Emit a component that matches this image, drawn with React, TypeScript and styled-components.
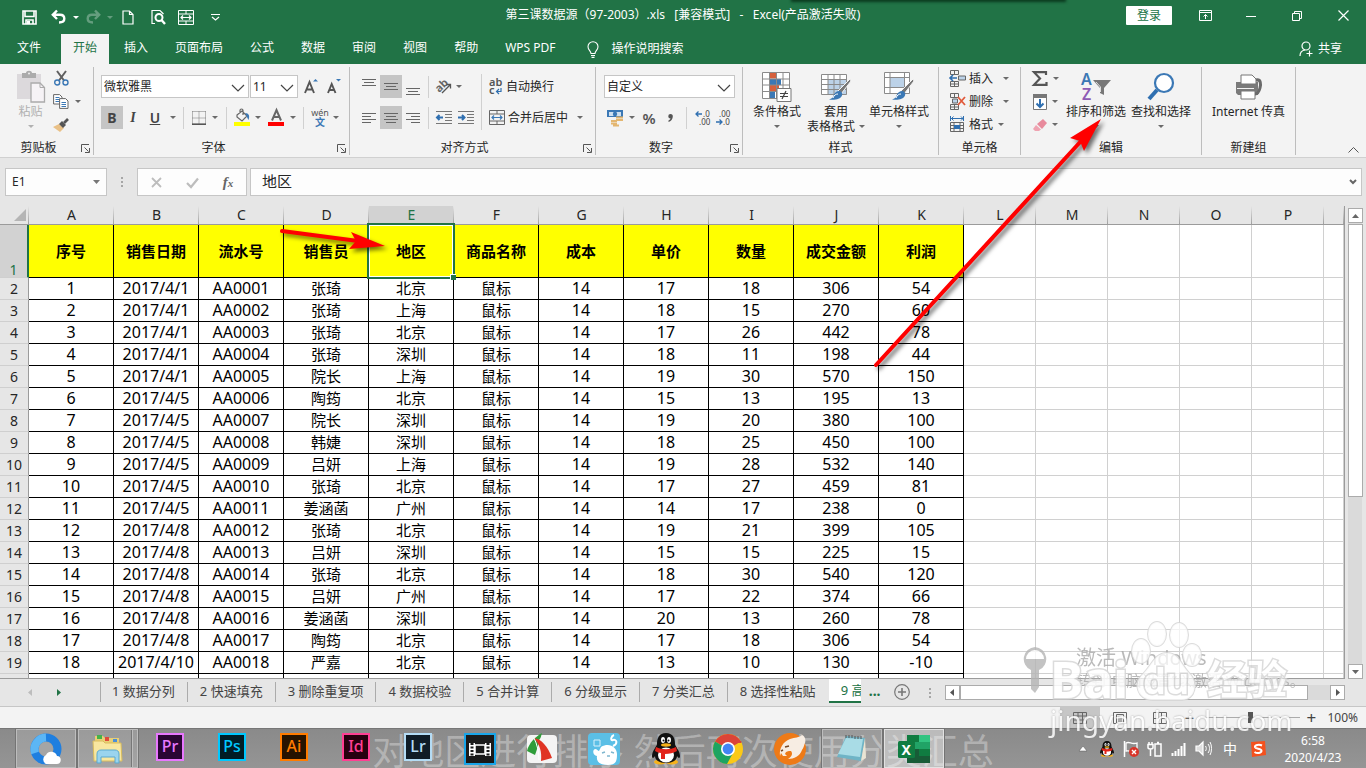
import React from 'react';
import styled, { createGlobalStyle, css } from 'styled-components';

const UI_FONT = '"Noto Sans", "Noto Sans CJK SC", sans-serif';
const GREEN = '#217346';

const GlobalStyle = createGlobalStyle`
  *, *::before, *::after { box-sizing: border-box; }
  body { margin: 0; background: #e6e6e6; }
  button, input, select { font: inherit; color: inherit; margin: 0; padding: 0; border: 0; background: none; border-radius: 0; outline: none; }
  button { display: flex; align-items: center; justify-content: center; white-space: nowrap; }
  svg { display: block; flex: none; overflow: visible; }
`;

const Window = styled.div`
  position: relative;
  display: flex;
  flex-direction: column;
  height: 100vh;
  overflow: hidden;
  font: 12px/16px ${UI_FONT};
  color: #262626;
  background: #e6e6e6;
`;

/* ---------- title bar ---------- */
const TitleBar = styled.header`
  position: relative;
  display: flex;
  height: 34px;
  background: ${GREEN};
  color: #fff;
`;
const TopShade = styled.div`
  position: absolute;
  top: -4px;
  left: 58%;
  width: 20%;
  height: 4px;
  box-shadow: 0 1px 3px 1px #0b3a1f;
`;
const QuickAccess = styled.div`
  flex: 1;
  display: flex;
  align-items: center;
  button:first-child { margin-left: 14px; }
`;
const QuickButton = styled.button<{ $w: number; $dim?: boolean }>`
  width: ${(p) => p.$w}px;
  height: 24px;
  opacity: ${(p) => (p.$dim ? 0.3 : 1)};
`;
const DocTitle = styled.div`
  line-height: 30px;
  white-space: pre;
`;
const WindowControls = styled.div`
  flex: 1;
  display: flex;
  justify-content: flex-end;
  align-items: center;
  height: 31px;
`;
const LoginButton = styled.button`
  width: 46px;
  height: 19px;
  margin-right: 10px;
  background: #fff;
  color: ${GREEN};
  border-radius: 1px;
`;
const ControlButton = styled.button`
  width: 46px;
  height: 30px;
`;

/* ---------- ribbon tabs ---------- */
const TabRow = styled.nav`
  display: flex;
  height: 30px;
  gap: 3px;
  padding-left: 5px;
  background: ${GREEN};
  color: #fff;
`;
const RibbonTab = styled.button<{ $active?: boolean; $file?: boolean }>`
  height: 30px;
  padding: 0 12px 2px;
  ${(p) => p.$file && 'margin-right: 5px;'}
  ${(p) => p.$active && css`background: #f3f3f3; color: ${GREEN};`}
`;
const TellMe = styled.button`
  gap: 13px;
  padding: 0 12px 0 16px;
`;
const ShareButton = styled.button`
  gap: 5px;
  margin-left: auto;
  padding-right: 24px;
`;

/* ---------- ribbon ---------- */
const Ribbon = styled.section`
  display: flex;
  height: 94px;
  background: #f3f3f3;
  border-bottom: 1px solid #d0d0d0;
`;
const Group = styled.div<{ $w: number }>`
  display: flex;
  flex-direction: column;
  flex: none;
  width: ${(p) => p.$w}px;
  height: 88px;
  margin-top: 3px;
  border-right: 1px solid #bdbdbd;
`;
const GroupBody = styled.div<{ $pad?: number }>`
  display: flex;
  height: 69px;
  padding-left: ${(p) => p.$pad ?? 0}px;
`;
const Caption = styled.div`
  display: flex;
  align-items: center;
  height: 19px;
  padding-top: 5px;
  line-height: 14px;
`;
const CaptionText = styled.span`
  flex: 1;
  text-align: center;
`;
const Launcher = styled.button`
  width: 16px;
  height: 14px;
`;
const TwoRows = styled.div`
  display: flex;
  flex-direction: column;
  align-items: flex-start;
  gap: 8px;
  padding-top: 8px;
`;
const ThreeRows = styled.div`
  display: flex;
  flex-direction: column;
`;
const Line = styled.div`
  display: flex;
  align-items: center;
  height: 23px;
`;
const Tool = styled.button<{ $w: number; $on?: boolean }>`
  width: ${(p) => p.$w}px;
  height: 23px;
  background: ${(p) => (p.$on ? '#c5c5c5' : 'transparent')};
`;
const LetterTool = styled(Tool)<{ $style: 'b' | 'i' | 'u' }>`
  font-size: 14px;
  color: #444;
  font-weight: ${(p) => (p.$style === 'b' ? 700 : 600)};
  font-style: ${(p) => (p.$style === 'i' ? 'italic' : 'normal')};
  text-decoration: ${(p) => (p.$style === 'u' ? 'underline' : 'none')};
  font-family: ${(p) => (p.$style === 'i' ? '"Liberation Serif", serif' : UI_FONT)};
`;
const SignTool = styled(Tool)`
  font: 600 15px/20px ${UI_FONT};
  color: #555;
`;
const TextTool = styled.button`
  gap: 3px;
  height: 23px;
  padding-left: 7px;
`;
const Divider = styled.span<{ $w: number }>`
  display: flex;
  justify-content: center;
  width: ${(p) => p.$w}px;
  height: 22px;
  &::before { content: ''; width: 1px; background: #d0d0d0; }
`;
const TallDivider = styled.span`
  width: 1px;
  height: 56px;
  margin: 7px 0 0 4px;
  background: #d0d0d0;
`;
const ComboBox = styled.span<{ $w: number }>`
  position: relative;
  display: flex;
  width: ${(p) => p.$w}px;
  height: 23px;
  margin-right: 1px;
  background: #fff;
  border: 1px solid #c6c6c6;
  select { appearance: none; flex: 1; min-width: 0; padding-left: 2px; }
  svg { position: absolute; right: 3px; top: 8px; pointer-events: none; }
`;
const BigTool = styled.button<{ $w: number; $dim?: boolean }>`
  flex-direction: column;
  justify-content: flex-start;
  width: ${(p) => p.$w}px;
  padding-top: 3px;
  line-height: 15px;
  ${(p) => p.$dim && 'color: #b1b1b1;'}
`;
const BigIcon = styled.span`
  display: flex;
  align-items: center;
  height: 34px;
`;
const BigLine = styled.span`
  display: flex;
  align-items: center;
  gap: 4px;
  height: 15px;
`;
const CollapseButton = styled.button`
  align-self: flex-end;
  width: 26px;
  height: 15px;
  margin-left: auto;
`;

/* ---------- formula bar ---------- */
const FormulaBar = styled.section`
  display: flex;
  padding: 10px 4px 10px 5px;
  height: 48px;
`;
const Field = styled.div`
  display: flex;
  align-items: center;
  height: 28px;
  background: #fdfdfd;
  border: 1px solid #c6c6c6;
`;
const NameField = styled(Field)`
  width: 102px;
  padding: 0 6px;
  input { flex: 1; min-width: 0; }
`;
const Dots = styled.span`
  display: flex;
  flex-direction: column;
  align-items: center;
  justify-content: center;
  gap: 2px;
  width: 30px;
  i { width: 2px; height: 2px; background: #a6a6a6; }
`;
const FormulaButtons = styled(Field)`
  width: 110px;
  margin-right: 3px;
  button { width: 36px; height: 26px; }
`;
const FormulaField = styled(Field)`
  flex: 1;
  padding: 0 4px 0 11px;
  input { flex: 1; font-size: 15px; padding-bottom: 2px; }
`;
const FxSign = styled.span`
  font: italic 700 15px/18px "Liberation Serif", serif;
  color: #666;
  small { font-size: 11px; }
`;

/* ---------- sheet ---------- */
const SheetArea = styled.main`
  display: flex;
  flex: 1;
  min-height: 0;
`;
const Pane = styled.div`
  flex: 1;
  min-width: 0;
  overflow: hidden;
  border-right: 1px solid #9b9b9b;
  border-bottom: 1px solid #9b9b9b;
  background: #fff;
`;
const Grid = styled.table`
  width: 100%;
  table-layout: fixed;
  border-collapse: separate;
  border-spacing: 0;
  text-align: center;
  th, td { padding: 0; white-space: nowrap; overflow: hidden; }
`;
const ColHead = styled.th<{ $on?: boolean }>`
  height: 19px;
  font: 400 14px/18px ${UI_FONT};
  vertical-align: bottom;
  color: ${(p) => (p.$on ? GREEN : '#262626')};
  background: linear-gradient(#e6e6e6, #a0a0a0) right / 1px 100% no-repeat, ${(p) => (p.$on ? '#d2d2d2' : '#e6e6e6')};
  border-bottom: 1px solid #9b9b9b;
`;
const CornerHead = styled(ColHead)`
  svg { margin: 0 3px 3px auto; }
`;
const RowHead = styled.th<{ $on?: boolean }>`
  font: 400 14px/20px ${UI_FONT};
  vertical-align: bottom;
  color: ${(p) => (p.$on ? GREEN : '#262626')};
  background: ${(p) => (p.$on ? '#d2d2d2' : '#e6e6e6')};
  border-right: ${(p) => (p.$on ? `2px solid ${GREEN}` : '1px solid #9b9b9b')};
  border-bottom: 1px solid #cfcfcf;
  ${(p) => p.$on && 'line-height: 15px;'}
`;
const TitleRow = styled.tr`
  height: 53px;
`;
const DataRow = styled.tr`
  height: 22px;
`;
const TitleCell = styled.td`
  font-size: 15px;
  font-weight: 700;
  color: #000;
  background: #ff0;
  border-right: 1px solid #000;
  border-bottom: 1px solid #000;
`;
const ActiveCell = styled(TitleCell)`
  && { position: relative; overflow: visible; }
  &::before {
    content: '';
    position: absolute;
    inset: -2px;
    border: 2px solid ${GREEN};
    box-shadow: inset 0 0 0 1px #fff;
  }
  &::after {
    content: '';
    position: absolute;
    right: -3px;
    bottom: -3px;
    width: 6px;
    height: 6px;
    background: ${GREEN};
    border: solid #fff;
    border-width: 1px 0 0 1px;
  }
`;
const DataCell = styled.td<{ $han?: boolean }>`
  font-size: ${(p) => (p.$han ? 15 : 16)}px;
  line-height: 21px;
  color: #000;
  border-right: 1px solid #000;
  border-bottom: 1px solid #000;
`;
const EmptyCell = styled.td`
  border-right: 1px solid #d0d0d0;
  border-bottom: 1px solid #d0d0d0;
`;
const VerticalScroll = styled.div`
  display: flex;
  flex-direction: column;
  width: 14px;
  margin: 2px 4px 0 3px;
  background: #dadada;
`;
const ScrollArrow = styled.button`
  flex: none;
  width: 15px;
  height: 15px;
  background: #fff;
  border: 1px solid #ababab;
`;
const VerticalThumb = styled.div`
  height: 58%;
  width: 15px;
  margin-top: 1px;
  background: #fff;
  border: 1px solid #ababab;
`;
const Spacer = styled.span`
  flex: 1;
`;

/* ---------- sheet tabs ---------- */
const SheetBar = styled.div`
  display: flex;
  height: 28px;
  border-bottom: 1px solid #c6c6c6;
`;
const SheetNav = styled.div`
  display: flex;
  align-items: center;
  width: 100px;
  padding-left: 15px;
  button { width: 29px; height: 24px; }
`;
const SheetTab = styled.button`
  position: relative;
  height: 24px;
  padding: 0 12px;
  font-size: 13px;
  color: #444;
  &::before { content: ''; position: absolute; left: 0; top: 3px; width: 1px; height: 20px; background: #ababab; }
  & + & { padding-left: 13px; }
`;
const ActiveSheetTab = styled.button`
  justify-content: flex-start;
  width: 32px;
  height: 24px;
  margin-left: 1px;
  padding-left: 12px;
  overflow: hidden;
  font-size: 13px;
  color: ${GREEN};
  background: #fff;
  border-bottom: 2px solid ${GREEN};
`;
const MoreTabs = styled.button`
  width: 28px;
  height: 24px;
  color: ${GREEN};
  font-weight: 700;
  font-size: 14px;
`;
const AddSheet = styled.button`
  width: 26px;
  height: 26px;
`;
const HorizontalScroll = styled.div`
  flex: 1;
  display: flex;
  height: 15px;
  margin: 6px 21px 0 0;
  background: #dadada;
`;
const HorizontalThumb = styled.div`
  width: 87%;
  background: #fff;
  border: 1px solid #ababab;
`;

/* ---------- status bar ---------- */
const StatusBar = styled.footer`
  display: flex;
  align-items: center;
  justify-content: flex-end;
  height: 21px;
  padding-right: 8px;
  background: #f3f3f3;
  color: #444;
`;
const ViewButton = styled.button<{ $on?: boolean }>`
  width: 40px;
  height: 21px;
  background: ${(p) => (p.$on ? '#c6c6c6' : 'transparent')};
`;
const ZoomButton = styled.button`
  width: 18px;
  height: 21px;
  font-size: 17px;
`;
const ZoomSlider = styled.input`
  appearance: none;
  width: 100px;
  height: 11px;
  margin: 0 2px;
  background: linear-gradient(#ababab, #ababab) center / 100% 1px no-repeat;
  &::-webkit-slider-thumb { appearance: none; width: 5px; height: 11px; background: #555; }
`;
const ZoomValue = styled.span`
  margin-left: 7px;
`;

/* ---------- taskbar ---------- */
const Taskbar = styled.div`
  position: relative;
  display: flex;
  height: 40px;
  padding-left: 15px;
  background: linear-gradient(#8a8a8a, #959595);
  border-top: 1px solid #777;
  color: #fff;
`;
const Subtitle = styled.div`
  position: absolute;
  left: 0;
  right: 0;
  top: 0;
  height: 39px;
  overflow: hidden;
  text-align: center;
  font-size: 36px;
  line-height: 46px;
  white-space: pre;
  color: rgba(255, 255, 255, 0.32);
`;
const Slot = styled.button<{ $state?: 'open' | 'active' }>`
  position: relative;
  width: 62px;
  height: 39px;
  ${(p) => p.$state && css`
    width: 60px;
    margin: 0 1px;
    background: ${p.$state === 'active' ? 'rgba(255,255,255,.42)' : 'rgba(255,255,255,.14)'};
    border: 1px solid ${p.$state === 'active' ? '#e2e2e2' : '#bdbdbd'};
    box-shadow: 0 0 0 1px #747474;
  `}
`;
const StackedSlot = styled(Slot)`
  border-right-width: 1px;
  &::after { content: ''; position: absolute; right: 4px; top: 0; bottom: 0; width: 2px; background: #777; border-right: 1px solid #bdbdbd; }
`;
const AdobeTile = styled.span<{ $c: string; $bg: string }>`
  width: 28px;
  height: 28px;
  margin-bottom: 4px;
  border: 2px solid ${(p) => p.$c};
  background: ${(p) => p.$bg};
  color: ${(p) => p.$c};
  font-size: 16px;
  font-weight: 500;
  line-height: 23px;
`;
const Tray = styled.div`
  position: relative;
  display: flex;
  align-items: center;
  margin-left: auto;
`;
const TrayButton = styled.button<{ $w?: number }>`
  width: ${(p) => p.$w ?? 24}px;
  height: 38px;
  font-size: 14px;
`;
const Clock = styled.time`
  width: 84px;
  margin-right: 11px;
  text-align: center;
  line-height: 17px;
`;

/* ---------- overlays ---------- */
const Arrows = styled.svg`
  position: absolute;
  left: 0;
  top: 0;
  pointer-events: none;
  filter: drop-shadow(3px 3px 2px rgba(0, 0, 0, 0.55));
`;
const Activation = styled.div`
  position: absolute;
  right: 54px;
  bottom: 74px;
  display: flex;
  gap: 28px;
  width: 290px;
  color: #a9a9a9;
  pointer-events: none;
  opacity: 0.8;
  white-space: nowrap;
`;
const ActivationTitle = styled.div`
  font-size: 20px;
  line-height: 24px;
`;
const ActivationHint = styled.div`
  font-size: 15px;
  line-height: 20px;
`;
const Watermark = styled.div`
  position: absolute;
  right: 74px;
  bottom: 30px;
  width: 242px;
  color: #fff;
  pointer-events: none;
  opacity: 0.85;
`;
const WatermarkRow = styled.div`
  display: flex;
  align-items: flex-end;
  height: 82px;
  font-weight: 700;
  line-height: 46px;
  paint-order: stroke fill;
  -webkit-text-stroke: 3px #d6d6d6;
`;
const WatermarkLatin = styled.span`
  width: 83px;
  font-size: 50px;
`;
const WatermarkHan = styled.span`
  margin-left: 4px;
  font-size: 40px;
`;
const WatermarkPaw = styled.span`
  position: relative;
  width: 70px;
  height: 82px;
`;
const PawText = styled.span`
  position: absolute;
  left: 10px;
  bottom: 0;
  font-size: 36px;
  line-height: 42px;
`;
const WatermarkUrl = styled.div`
  font-size: 28px;
  line-height: 36px;
  text-shadow: 0 0 2px #888;
`;

/* ---------- icons ---------- */
type IconProps = { w?: number; h?: number; box?: string; children: React.ReactNode };
const Icon = ({ w = 16, h = 16, box, children }: IconProps) => (
  <svg width={w} height={h} viewBox={box ?? `0 0 ${w} ${h}`} fill="none" aria-hidden="true">{children}</svg>
);
const Caret = ({ c = '#6a6a6a' }: { c?: string }) => <Icon w={6} h={3}><path d="M0 0h6L3 3z" fill={c} /></Icon>;
const Chevron = () => <Icon w={14} h={8}><path d="M1 1l6 6 6-6" stroke="#444" strokeWidth="1.2" /></Icon>;
const LauncherIcon = () => <Icon w={9} h={9}><path d="M.5 8V.500h7.500M3.500 3.500l4 4M8.500 4v4.500H4" stroke="#555" /></Icon>;

const SaveIcon = () => (
  <Icon w={15} h={15}><path d="M1 1h13v13H1zM3 1v5.500h9V1M4 14v-4h7v4" stroke="#fff" strokeWidth="1.600" /><path d="M5 11h3v3H5z" fill="#fff" /></Icon>
);
const UndoIcon = ({ flip }: { flip?: boolean }) => (
  <Icon w={15} h={14}>
    <g transform={flip ? 'matrix(-1 0 0 1 15 0)' : undefined} stroke="#fff" strokeWidth="2.400">
      <path d="M6 .5L1.800 4.800 6 9M2 4.800h7c3 0 4.300 1.500 4.300 4S11.500 12.500 8 12.500" />
    </g>
  </Icon>
);
const PageIcon = () => <Icon w={12} h={15}><path d="M1 1h6.500L11 4.500V14H1zM7.500 1v3.500H11" stroke="#fff" strokeWidth="1.200" /></Icon>;
const PreviewIcon = () => (
  <Icon w={15} h={16}><path d="M4 14.500H1v-13h8L12.500 5" stroke="#fff" strokeWidth="1.200" /><circle cx="8" cy="8.500" r="3.500" stroke="#fff" strokeWidth="2" /><path d="M10.500 11l3.500 4" stroke="#fff" strokeWidth="2.400" /></Icon>
);
const MergeIcon = ({ c = '#666', a = '#3b78b5' }: { c?: string; a?: string }) => (
  <Icon w={16} h={15}>
    <path d="M.5.500h15v14H.5zM.5 4h15M.5 11h15M8 .5V4M8 11v3.500" stroke={c} />
    <path d="M3 7.500h10M5 5.500l-2 2 2 2M11 5.500l2 2-2 2" stroke={a} strokeWidth="1.200" />
  </Icon>
);
const BulbIcon = () => (
  <Icon w={12} h={17}><path d="M4 12.500c0-2.500-3-3.500-3-6.800a5 5 0 0 1 10 0c0 3.300-3 4.300-3 6.800zM4 14.500h4M4.500 16.400h3" stroke="#fff" strokeWidth="1.100" /></Icon>
);
const ShareIcon = () => (
  <Icon w={14} h={16}><circle cx="7" cy="5" r="4" stroke="#fff" strokeWidth="1.200" /><path d="M1 15c0-3.500 2-5.500 5-6M10.500 9.500v6M7.500 12.500h6" stroke="#fff" strokeWidth="1.200" /></Icon>
);
const PasteIcon = () => (
  <Icon w={30} h={32}>
    <path d="M1 3h24v25H1z" fill="#dcd9dc" /><path d="M6 2h4c0-3 6-3 6 0h4v5H6z" fill="#ababab" /><circle cx="13" cy="2.500" r="1" fill="#eee" />
    <path d="M15 12h9l4.500 4.500V31H15z" fill="#f6f3f6" stroke="#ababab" strokeWidth="1.300" /><path d="M24 12v4.500h4.500" stroke="#ababab" />
  </Icon>
);
const CutIcon = () => (
  <Icon w={15} h={15}><path d="M3 0l7 9.500M12 0L5 9.500" stroke="#5f5f5f" strokeWidth="2" /><circle cx="3.200" cy="11.500" r="2.500" stroke="#3b78b5" strokeWidth="1.400" /><circle cx="11.500" cy="11.500" r="2.500" stroke="#3b78b5" strokeWidth="1.400" /></Icon>
);
const CopyIcon = () => (
  <Icon w={16} h={15}>
    <path d="M.6.600h6L9 3v7H.6z" fill="#fff" stroke="#666" /><path d="M2.500 3.500h4M2.500 5.500h4M2.500 7.500h4" stroke="#3b78b5" />
    <path d="M6.600 4.600h6L15 7v7.400H6.600z" fill="#fff" stroke="#666" /><path d="M8.500 8.500h4.500M8.500 10.500h4.500M8.500 12.500h4.500" stroke="#3b78b5" />
  </Icon>
);
const BrushIcon = () => (
  <Icon w={16} h={14}><path d="M0 9l6-3 5 4-4 4z" fill="#e9c086" /><path d="M6 6l3-3 4 4-3 3z" fill="#555" /><path d="M11 5l4-4" stroke="#555" strokeWidth="2.600" /></Icon>
);
const SizeIcon = ({ up }: { up?: boolean }) => (
  <Icon w={14} h={16}>
    <path d={up ? 'M1 14L5.500 3l4.500 11M2.800 10.500h5.500' : 'M1 14l3.700-9L8.500 14M2.500 11h4.500'} stroke="#555" strokeWidth="1.900" />
    <path d={up ? 'M9 2.500L11.500 0 14 2.500z' : 'M9 0h5l-2.500 2.500z'} fill="#3b78b5" />
  </Icon>
);
const BorderIcon = () => <Icon w={14} h={14}><path d="M.5.500v13M13.500.500v13M7 .5v13M.5.500h13M.5 7h13" stroke="#777" strokeDasharray="1 1" /><path d="M0 13.200h14" stroke="#555" strokeWidth="1.600" /></Icon>;
const FillIcon = () => (
  <Icon w={17} h={17}><path d="M3 6l5-4 5 5-5 5-5-4zM6 4V1.500a1.500 1.500 0 0 1 3 0V6" stroke="#666" strokeWidth="1.200" /><path d="M11 4c4 0 5 3 3.500 7C13 9 12.500 6 11 4z" fill="#3b78b5" /><path d="M0 13h16v4H0z" fill="#ff0" /></Icon>
);
const FontColorIcon = () => (
  <Icon w={17} h={17}><path d="M4 11.500L8.500 1 13 11.500M5.700 8h5.600" stroke="#666" strokeWidth="2" /><path d="M0 13h16v4H0z" fill="red" /></Icon>
);
const PhoneticBox = styled.span`
  display: flex;
  flex-direction: column;
  align-items: center;
  font-size: 9px;
  line-height: 9px;
  color: #555;
  b { font-size: 10px; line-height: 10px; color: #3b78b5; }
`;
const lineSets: Record<string, string> = {
  top: 'M0 2.500h14M2 5.500h10M0 8.500h14',
  middle: 'M0 6.500h14M2 9.500h10M0 12.500h14',
  bottom: 'M0 11.500h14M2 14.500h10M0 17.500h14',
  left: 'M0 5.500h14M0 8.500h9M0 11.500h14M0 14.500h9',
  center: 'M0 5.500h14M2 8.500h10M0 11.500h14M2 14.500h10',
  right: 'M0 5.500h14M5 8.500h9M0 11.500h14M5 14.500h9',
};
const AlignIcon = ({ kind }: { kind: string }) => <Icon w={14} h={20}><path d={lineSets[kind]} stroke="#666" /></Icon>;
const OrientIcon = () => (
  <Icon w={17} h={17}><text x="0" y="13" fontSize="11" fontWeight="700" fill="#666" transform="rotate(-45 4 10)" fontFamily="Noto Sans">ab</text><path d="M6 15l8-8M10.500 6.500h4v4" stroke="#555" strokeWidth="1.300" /></Icon>
);
const IndentIcon = ({ right }: { right?: boolean }) => (
  <Icon w={16} h={14}>
    <path d="M0 .5h16M9 3.500h7M9 6.500h7M9 9.500h7M0 12.500h16" stroke="#777" />
    <path d={right ? 'M0 6.500h6M4 4l2.500 2.500L4 9' : 'M1 6.500h6M3.500 4L1 6.500 3.500 9'} stroke="#2f6fb0" strokeWidth="2" />
  </Icon>
);
const WrapIcon = () => (
  <Icon w={14} h={17}><text x="0" y="8" fontSize="11" fontWeight="600" fill="#555" fontFamily="Noto Sans">ab</text><text x="0" y="16" fontSize="11" fontWeight="600" fill="#555" fontFamily="Noto Sans">c</text><path d="M12 10v3.500H8M10 11l-2.500 2.500L10 16" stroke="#2f6fb0" strokeWidth="1.200" /></Icon>
);
const CommaIcon = () => <Icon w={5} h={8}><path d="M2.500 0a2.300 2.300 0 0 1 2.300 2.500C4.800 5 3 7.300.5 8V6.500c1.200-.5 1.900-1.200 2-2A2.200 2.200 0 0 1 2.500 0z" fill="#555" /></Icon>;
const CurrencyIcon = () => (
  <Icon w={17} h={17}>
    <path d="M0 1h16v7H0z" fill="#3b78b5" /><path d="M2 3h12v4H2z" fill="#cfe0f0" /><circle cx="8" cy="5" r="2.200" fill="#3b78b5" />
    <path d="M4 8h12v9H4z" fill="#f3f3f3" /><path d="M9 8.500h7M9 11h7M4 12h6M4 14.500h6M6 16.500h6" stroke="#e3b670" strokeWidth="1.800" />
  </Icon>
);
const DecimalIcon = ({ more }: { more?: boolean }) => (
  <Icon w={15} h={16}>
    <text x={more ? 7 : 3} y="7" fontSize="8" fill="#444" fontFamily="Noto Sans">{more ? '.0' : '.00'}</text>
    <text x={more ? 3 : 7} y="15" fontSize="8" fill="#444" fontFamily="Noto Sans">{more ? '.00' : '.0'}</text>
    <path d={more ? 'M0 4h6M2.500 1.500L0 4l2.500 2.500' : 'M0 12h6M3.500 9.500L6 12l-2.500 2.500'} stroke="#2f6fb0" strokeWidth="1.300" />
  </Icon>
);
const CondIcon = () => (
  <Icon w={30} h={30}>
    <path d="M.5.500h27v26H.5z" fill="#fff" /><path d="M8 .5h6v6H8zM8 13h9v6H8z" fill="#d6603c" /><path d="M8 7h11v6H8zM8 19h5v7H8z" fill="#3b78b5" />
    <path d="M.5.500h27v26H.5zM.5 7h27M.5 13h27M.5 19.500h27M7.500.500v26M14.500.500v26M21 .5v26" stroke="#8a8a8a" />
    <path d="M15 16.500h14v13H15z" fill="#fff" stroke="#777" /><path d="M18 21.500h8M18 24.500h8M24 19l-4 8" stroke="#444" strokeWidth="1.200" />
  </Icon>
);
const StyleBrush = () => (
  <><path d="M29 7L17 19l3 3L30 9z" fill="#777" stroke="#f3f3f3" /><path d="M18 19c2 0 4 2 3 4.500-1.500 4-8 5-13 4 4-1 4-3 5-5s3-3.500 5-3.500z" fill="#3b78b5" /><path d="M12 26c1-3 3-4 5-4" stroke="#fff" /></>
);
const TableStyleIcon = () => (
  <Icon w={30} h={30}><path d="M.5 2.500h25v20H.5z" fill="#fff" /><path d="M7 8h19v15H7z" fill="#bcd2e8" /><path d="M.5 2.500h25v20H.5zM.5 7.500h25M.5 12.500h25M.5 17.500h25M7 2.500v20M13 2.500v20M19 2.500v20" stroke="#8a8a8a" /><StyleBrush /></Icon>
);
const CellStyleIcon = () => (
  <Icon w={30} h={30}><path d="M.5.500h25v21H.5z" fill="#fff" /><path d="M6 5.500h14v10H6z" fill="#bcd2e8" /><path d="M.5.500h25v21H.5zM.5 5.500h25M.5 15.500h25M6 .5v21M20.500.500v21" stroke="#8a8a8a" /><StyleBrush /></Icon>
);
const InsertIcon = () => (
  <Icon w={17} h={17}><path d="M1.500.500h8v4h-8zM5.500.500v4M1.500 11.500h8v5h-8zM5.500 11.500v5M1.500 14h8" stroke="#666" /><path d="M9.500 6h7v4h-7z" fill="#bcd2e8" stroke="#666" /><path d="M1 8h7M4 5L1 8l3 3" stroke="#2f6fb0" strokeWidth="1.600" /></Icon>
);
const DeleteIcon = () => (
  <Icon w={17} h={17}><path d="M1.500.500h8v4h-8zM5.500.500v4M1.500 11.500h8v5h-8zM5.500 11.500v5M1.500 14h8" stroke="#666" /><path d="M3.500 6h5v4h-5z" fill="#bcd2e8" stroke="#666" /><path d="M9 4l7 8M16 4l-7 8" stroke="#e0593a" strokeWidth="1.800" /></Icon>
);
const FormatIcon = () => (
  <Icon w={17} h={17}><path d="M1.500 0v5M14.500 0v5M2 2.500h12M4.500.500l-2 2 2 2M12 .5l2 2-2 2" stroke="#2f6fb0" /><path d="M1.500 6.500h13v9h-13zM1.500 9.500h13M1.500 12.500h13M5 6.500v9M11 6.500v9" stroke="#666" /><path d="M5 9h6v4H5z" fill="#2f6fb0" /></Icon>
);
const SumIcon = () => <Icon w={16} h={15}><path d="M14 4V1.200H2L8 7.500 2 13.800h12.500V11" stroke="#555" strokeWidth="2.200" /></Icon>;
const FillDownIcon = () => <Icon w={14} h={16}><path d="M.5.500h13v15H.5z" fill="#fff" stroke="#777" /><path d="M0 0h14v4H0z" fill="#777" /><path d="M7 5v8M3.500 9.500L7 13l3.500-3.500" stroke="#2f6fb0" strokeWidth="2" /></Icon>;
const EraserIcon = () => <Icon w={14} h={14}><path d="M4 6l6-5 4 4-5 6z" fill="#e88a9c" /><path d="M3 7l5 4.500L6 13H2L0 11z" fill="#efa3b1" /></Icon>;
const SortIcon = () => (
  <Icon w={30} h={30}>
    <text x="0" y="13" fontSize="16" fontWeight="600" fill="#3b78b5" fontFamily="Noto Sans">A</text><text x="1" y="28" fontSize="16" fontWeight="600" fill="#8e5bb5" fontFamily="Noto Sans">Z</text>
    <path d="M12 8h18l-7 8v7l-4-2v-5z" fill="#777" /><path d="M15 10l4.500 5v5" stroke="#ddd" />
  </Icon>
);
const FindIcon = () => <Icon w={28} h={28}><path d="M10 17L2 26" stroke="#2f6fb0" strokeWidth="4" /><circle cx="17" cy="10" r="9" fill="#fff" stroke="#3b78b5" strokeWidth="2.200" /></Icon>;
const FaxIcon = () => (
  <Icon w={26} h={26}><path d="M0 8h22v13H2l-2-2z" fill="#7a7a7a" /><path d="M5 1h11l4 4v5H5z" fill="#fff" stroke="#777" /><path d="M5 17h14v8H5z" fill="#fff" stroke="#777" /><path d="M20 6c5-1 5 4 4 8s-3 6-5 6" stroke="#6a6a6a" strokeWidth="3" /><path d="M1 14.500h17" stroke="#f3f3f3" /></Icon>
);
const ViewIcon = ({ kind }: { kind: 'normal' | 'page' | 'break' }) => (
  <Icon w={14} h={12}>
    <path d="M.5.500h13v11H.5z" stroke="#666" />
    <path d={kind === 'normal' ? 'M.5 4h13M.5 8h13M5 .5v11M9.500.500v11' : kind === 'page' ? 'M3.500 2.500h7v9M3.500 2.500v9M5 5h4M5 7h4M5 9h4' : 'M.5 6.500h5V.500M8.500.500v6h5M8.500 6.500v5'} stroke="#666" />
  </Icon>
);
const QQPenguin = ({ s }: { s: number }) => (
  <Icon w={s} h={s} box="0 0 32 32">
    <ellipse cx="10" cy="29" rx="6" ry="2.500" fill="#f6b21b" /><ellipse cx="22" cy="29" rx="6" ry="2.500" fill="#f6b21b" />
    <path d="M16 0c7 0 9 5 9 11 0 2 5 7 5 12 0 3-2 2-3 0 0 4-4 7-11 7S5 27 5 23c-1 2-3 3-3 0C2 18 7 13 7 11 7 5 9 0 16 0z" fill="#111" />
    <ellipse cx="16" cy="22" rx="8" ry="7.500" fill="#fff" /><path d="M6 14c6 3 14 3 20 0l1 4c-3 2-8 3-12 3v5h-4v-6c-2 0-4-1-6-2z" fill="#e2231a" />
    <ellipse cx="13" cy="7" rx="2" ry="3" fill="#fff" /><ellipse cx="19" cy="7" rx="2" ry="3" fill="#fff" /><circle cx="13.500" cy="7.500" r="1" fill="#111" /><circle cx="18.500" cy="7.500" r="1" fill="#111" />
    <ellipse cx="16" cy="12" rx="5" ry="1.700" fill="#f6b21b" />
  </Icon>
);
const BrowserIcon = () => (
  <Icon w={32} h={32}>
    <circle cx="16" cy="16" r="11.500" stroke="#1f7fe0" strokeWidth="8" /><path d="M5 20A12 12 0 0 1 16 4.500" stroke="#5cb6f5" strokeWidth="8" /><circle cx="16" cy="16" r="7" fill="#a5a5a5" />
    <path d="M16 31a5 5 0 0 1 0-9 6 6 0 0 1 11 1c5 0 5 8 0 8z" fill="#fff" />
  </Icon>
);
const FolderIcon = () => (
  <Icon w={32} h={32}>
    <path d="M3 3h8l2 2h14v22H3z" fill="#e9cf74" /><path d="M5 2h5v4H5z" fill="#45b24a" /><path d="M13 4h4v4h-4z" fill="#e04a3a" /><path d="M21 6h4v3h-4z" fill="#4a90d9" />
    <path d="M1 8h10l2 2h16l1 18H2z" fill="#f8e7a0" stroke="#d9bd5e" /><path d="M5 30V21c0-3 2-4 4-4h14c2 0 4 1 4 4v9h-4v-6H9v6z" fill="#9ad4ee" stroke="#5aa9cf" />
  </Icon>
);
const FilmIcon = () => (
  <Icon w={32} h={32}><path d="M1 1h30v30H1z" fill="#1a1a1a" stroke="#19a5e8" strokeWidth="2" /><path d="M5 10h6v13H5zM21 10h6v13h-6z" fill="#fff" /><path d="M11 12h10v9H11z" stroke="#fff" strokeWidth="1.500" /><path d="M8 10v13M24 10v13" stroke="#1a1a1a" strokeWidth="3" strokeDasharray="2 1.500" /></Icon>
);
const CaptureIcon = () => (
  <Icon w={30} h={32}><rect y="2" width="30" height="28" rx="4" fill="#f4f4f4" /><path d="M0 18C2 10 8 4 15 0c-1 3-1 5-3 7 0 4-2 9-4 15z" fill="#2f9d3a" /><path d="M7 5c7 1 14 8 18 20l-11 3c1-9-1-16-7-23z" fill="#e03423" /><path d="M7 5c3 6 5 14 5 22" stroke="#fff" /></Icon>
);
const BearIcon = () => (
  <Icon w={32} h={32}><rect width="32" height="32" rx="4" fill="#5bbfe6" /><path d="M13 14c8-5 16 0 16 7s-1 11-9 11-12-3-11-9c-4 0-5-6-2-7 2 0 3 2 4 2z" fill="#fff" /><path d="M25 13c5-2 4-7 0-6-3 1-2-4 1-5" stroke="#fff" strokeWidth="2" /><path d="M14 20l3-1M23 19l3 1M19 23h3" stroke="#7fb7cf" strokeWidth="1.500" /><path d="M6 7h6v6H6z" stroke="#d9f1fb" /></Icon>
);
const ChromeIcon = () => (
  <Icon w={30} h={30}>
    <circle cx="15" cy="15" r="15" fill="#fbc916" /><path d="M15 15L2 7.500A15 15 0 0 1 28 7.500z" fill="#db4437" /><path d="M15 15L2 7.500A15 15 0 0 0 14 30l6-11z" fill="#1da462" /><path d="M15 8h13.300" stroke="#db4437" strokeWidth="2" />
    <circle cx="15" cy="15" r="7" fill="#fff" /><circle cx="15" cy="15" r="5.400" fill="#4285f4" />
  </Icon>
);
const CheetahIcon = () => (
  <Icon w={32} h={32}><circle cx="16" cy="16" r="16" fill="#ee7a17" /><path d="M28 2c3 1 4 5 3 8-1 2-1 4-3 7-2 6-8 9-14 9 4-3 5-5 3-8-3 0-5 0-6 3l2 2-4 0-2-3-1 3c-1-8 3-14 10-17 5-2 9-1 12-4z" fill="#f7ede3" /><path d="M11 14l4-1M9 17l-2 1" stroke="#7a4a26" strokeWidth="1.600" /></Icon>
);
const NotepadIcon = () => (
  <Icon w={32} h={32}><path d="M10 3l19 2-4 23-24-4z" fill="#6fb4c6" /><path d="M10 5l17 1-3 18-22-3z" fill="#a9dce6" /><path d="M29 5l1 20-5 3z" fill="#e9e4d4" /><path d="M10 2v3M13 2v3M16 2v3M19 3v3M22 3v3M25 3v3" stroke="#555" /></Icon>
);
const ExcelLogo = () => (
  <Icon w={32} h={28}>
    <path d="M9 0h23v28H9z" fill="#21a366" /><path d="M9 0h12v7H9z" fill="#107c41" /><path d="M21 0h11v7H21z" fill="#33c481" /><path d="M9 14h12v14H9z" fill="#185c37" /><path d="M21 14h11v7H21z" fill="#107c41" /><path d="M21 21h11v7H21z" fill="#185c37" />
    <rect y="6" width="17" height="17" rx="1.500" fill="#107c41" /><text x="3.500" y="19.500" fontSize="14" fontWeight="700" fill="#fff" fontFamily="Noto Sans">X</text>
  </Icon>
);
const FlagIcon = () => <Icon w={16} h={16}><path d="M1.500 0v16" stroke="#fff" strokeWidth="1.500" /><path d="M3 2c4-2 5 2 11 0v8c-5 2-7-1-11 0z" stroke="#fff" strokeWidth="1.300" /><circle cx="11" cy="11" r="5" fill="#d8352a" /><path d="M9 9l4 4M13 9l-4 4" stroke="#fff" strokeWidth="1.400" /></Icon>;
const PowerIcon = () => <Icon w={16} h={16}><path d="M8 3h6v12H8zM10 1.500h2M3.500 8v7M1 3.500v3c0 2 5 2 5 0v-3zM2 1v2M5 1v2" stroke="#fff" strokeWidth="1.500" /></Icon>;
const SignalIcon = () => <Icon w={16} h={14}><path d="M1.500 14v-3M4.500 14V9M7.500 14V7M10.500 14V4M13.500 14V1" stroke="#fff" strokeWidth="2" /></Icon>;
const VolumeIcon = () => <Icon w={17} h={15}><path d="M1 5h3l4-4v13l-4-4H1z" stroke="#fff" strokeWidth="1.200" fill="#ddd" /><path d="M10.500 5c1 1.500 1 3.500 0 5M13 3c2 2.500 2 6.500 0 9M15 1c2 3 2 10 0 13" stroke="#fff" /></Icon>;
const SogouIcon = () => <Icon w={16} h={16}><path d="M1 1l14-1 1 14-14 2z" fill="#f4511e" /><path d="M12 4.500C9 3 4.500 4 5 6.300c.5 2 6.500 1 6.500 3.500 0 2.300-4.500 3-7 1.200" stroke="#fff" strokeWidth="2" /></Icon>;

/* ---------- data ---------- */
const headings = ['序号', '销售日期', '流水号', '销售员', '地区', '商品名称', '成本', '单价', '数量', '成交金额', '利润'];
const letters = 'ABCDEFGHIJKLMNOP'.split('');
const emptyCols = ['L', 'M', 'N', 'O', 'P', 'Q'];
const sales: Array<[string, string, string, number, number, number, number]> = [
  ['2017/4/1', '张琦', '北京', 17, 18, 306, 54],
  ['2017/4/1', '张琦', '上海', 18, 15, 270, 60],
  ['2017/4/1', '张琦', '北京', 17, 26, 442, 78],
  ['2017/4/1', '张琦', '深圳', 18, 11, 198, 44],
  ['2017/4/1', '院长', '上海', 19, 30, 570, 150],
  ['2017/4/5', '陶筠', '北京', 15, 13, 195, 13],
  ['2017/4/5', '院长', '深圳', 19, 20, 380, 100],
  ['2017/4/5', '韩婕', '深圳', 18, 25, 450, 100],
  ['2017/4/5', '吕妍', '上海', 19, 28, 532, 140],
  ['2017/4/5', '张琦', '北京', 17, 27, 459, 81],
  ['2017/4/5', '姜涵菡', '广州', 14, 17, 238, 0],
  ['2017/4/8', '张琦', '北京', 19, 21, 399, 105],
  ['2017/4/8', '吕妍', '深圳', 15, 15, 225, 15],
  ['2017/4/8', '张琦', '北京', 18, 30, 540, 120],
  ['2017/4/8', '吕妍', '广州', 17, 22, 374, 66],
  ['2017/4/8', '姜涵菡', '深圳', 20, 13, 260, 78],
  ['2017/4/8', '陶筠', '北京', 17, 18, 306, 54],
  ['2017/4/10', '严嘉', '北京', 13, 10, 130, -10],
];
const sheetTabs = ['1 数据分列', '2 快速填充', '3 删除重复项', '4 数据校验', '5 合并计算', '6 分级显示', '7 分类汇总', '8 选择性粘贴'];
const ribbonTabs = ['插入', '页面布局', '公式', '数据', '审阅', '视图', '帮助', 'WPS PDF'];
const adobe = [
  ['Pr', '#e878ff', '#2a0634'],
  ['Ps', '#00c8ff', '#001d26'],
  ['Ai', '#ff7c00', '#261300'],
  ['Id', '#ff3f93', '#27000f'],
  ['Lr', '#b4dcf5', '#0f1c26'],
];

type ComboProps = { label: string; value: string; w: number };
const Combo = ({ label, value, w }: ComboProps) => (
  <ComboBox $w={w}><select aria-label={label} defaultValue={value}><option>{value}</option></select><Chevron /></ComboBox>
);
const CaretTool = ({ w, label }: { w: number; label: string }) => <Tool $w={w} aria-label={label}><Caret /></Tool>;
const GroupCaption = ({ text, launcher }: { text: string; launcher?: boolean }) => (
  <Caption><CaptionText>{text}</CaptionText>{launcher && <Launcher aria-label={`${text}设置`}><LauncherIcon /></Launcher>}</Caption>
);

const CellsLine = styled.button<{ $tight?: boolean }>`
  justify-content: flex-start;
  gap: 3px;
  height: 23px;
  > svg:last-child { margin-left: ${(p) => (p.$tight ? 2 : 7)}px; }
`;

export default function App() {
  return (
    <Window>
      <GlobalStyle />
      <TitleBar>
        <QuickAccess>
          <QuickButton $w={30} aria-label="保存"><SaveIcon /></QuickButton>
          <QuickButton $w={28} aria-label="撤消"><UndoIcon /></QuickButton>
          <QuickButton $w={8} aria-label="撤消选项"><Caret c="#fff" /></QuickButton>
          <QuickButton $w={26} $dim aria-label="恢复"><UndoIcon flip /></QuickButton>
          <QuickButton $w={8} $dim aria-label="恢复选项"><Caret c="#fff" /></QuickButton>
          <QuickButton $w={28} aria-label="新建"><PageIcon /></QuickButton>
          <QuickButton $w={32} aria-label="打印预览"><PreviewIcon /></QuickButton>
          <QuickButton $w={24} aria-label="合并后居中"><MergeIcon c="#fff" a="#fff" /></QuickButton>
          <QuickButton $w={34} aria-label="自定义快速访问工具栏"><Icon w={9} h={7}><path d="M0 .5h9M1 3l3.500 3L8 3" stroke="#fff" strokeWidth="1.200" /></Icon></QuickButton>
        </QuickAccess>
        <DocTitle>第三课数据源（97-2003）.xls   [兼容模式]   -   Excel(产品激活失败)</DocTitle>
        <WindowControls>
          <LoginButton>登录</LoginButton>
          <ControlButton aria-label="功能区显示选项"><Icon w={13} h={11}><path d="M.5.500h12v10H.5zM.5 2.500h12M6.500 9V4.500M4.500 6.500l2-2 2 2" stroke="#fff" /></Icon></ControlButton>
          <ControlButton aria-label="最小化"><Icon w={10} h={2}><path d="M0 1.500h10" stroke="#fff" /></Icon></ControlButton>
          <ControlButton aria-label="还原"><Icon w={10} h={10}><path d="M.5 2.500h7v7h-7zM2.500 2.500v-2h7v7h-2" stroke="#fff" /></Icon></ControlButton>
          <ControlButton aria-label="关闭"><Icon w={11} h={11}><path d="M.5.500l10 10M10.500.500l-10 10" stroke="#fff" strokeWidth="1.200" /></Icon></ControlButton>
        </WindowControls>
        <TopShade />
      </TitleBar>

      <TabRow>
        <RibbonTab $file>文件</RibbonTab>
        <RibbonTab $active>开始</RibbonTab>
        {ribbonTabs.map((t) => <RibbonTab key={t}>{t}</RibbonTab>)}
        <TellMe><BulbIcon />操作说明搜索</TellMe>
        <ShareButton><ShareIcon />共享</ShareButton>
      </TabRow>

      <Ribbon>
        <Group $w={94}>
          <GroupBody $pad={12}>
            <BigTool $w={37} $dim><BigIcon><PasteIcon /></BigIcon><BigLine>粘贴</BigLine><BigLine><Caret c="#b1b1b1" /></BigLine></BigTool>
            <ThreeRows>
              <Line><Tool $w={24} aria-label="剪切"><CutIcon /></Tool></Line>
              <Line><Tool $w={24} aria-label="复制"><CopyIcon /></Tool><CaretTool w={10} label="复制选项" /></Line>
              <Line><Tool $w={24} aria-label="格式刷"><BrushIcon /></Tool></Line>
            </ThreeRows>
          </GroupBody>
          <GroupCaption text="剪贴板" launcher />
        </Group>

        <Group $w={256}>
          <GroupBody $pad={7}>
            <TwoRows>
              <Line>
                <Combo label="字体" value="微软雅黑" w={148} />
                <Combo label="字号" value="11" w={48} />
                <Tool $w={24} aria-label="增大字号"><SizeIcon up /></Tool>
                <Tool $w={22} aria-label="减小字号"><SizeIcon /></Tool>
              </Line>
              <Line>
                <LetterTool $w={22} $on $style="b">B</LetterTool>
                <LetterTool $w={20} $style="i">I</LetterTool>
                <LetterTool $w={24} $style="u">U</LetterTool>
                <CaretTool w={11} label="下划线选项" />
                <Divider $w={11} />
                <Tool $w={20} aria-label="边框"><BorderIcon /></Tool><CaretTool w={12} label="边框选项" />
                <Divider $w={11} />
                <Tool $w={20} aria-label="填充颜色"><FillIcon /></Tool><CaretTool w={12} label="填充选项" />
                <Tool $w={24} aria-label="字体颜色"><FontColorIcon /></Tool><CaretTool w={10} label="颜色选项" />
                <Divider $w={11} />
                <Tool $w={22} aria-label="拼音"><PhoneticBox>wén<b>文</b></PhoneticBox></Tool><CaretTool w={10} label="拼音选项" />
              </Line>
            </TwoRows>
          </GroupBody>
          <GroupCaption text="字体" launcher />
        </Group>

        <Group $w={246}>
          <GroupBody $pad={8}>
            <TwoRows>
              <Line>
                <Tool $w={22} aria-label="顶端对齐"><AlignIcon kind="top" /></Tool>
                <Tool $w={22} $on aria-label="垂直居中"><AlignIcon kind="middle" /></Tool>
                <Tool $w={22} aria-label="底端对齐"><AlignIcon kind="bottom" /></Tool>
                <Divider $w={9} />
                <Tool $w={22} aria-label="方向"><OrientIcon /></Tool><CaretTool w={8} label="方向选项" />
              </Line>
              <Line>
                <Tool $w={22} aria-label="左对齐"><AlignIcon kind="left" /></Tool>
                <Tool $w={22} $on aria-label="居中"><AlignIcon kind="center" /></Tool>
                <Tool $w={22} aria-label="右对齐"><AlignIcon kind="right" /></Tool>
                <Divider $w={9} />
                <Tool $w={22} aria-label="减少缩进量"><IndentIcon /></Tool>
                <Tool $w={22} aria-label="增加缩进量"><IndentIcon right /></Tool>
              </Line>
            </TwoRows>
            <TallDivider />
            <TwoRows>
              <TextTool><WrapIcon />自动换行</TextTool>
              <Line><TextTool><MergeIcon />合并后居中</TextTool><CaretTool w={24} label="合并选项" /></Line>
            </TwoRows>
          </GroupBody>
          <GroupCaption text="对齐方式" launcher />
        </Group>

        <Group $w={147}>
          <GroupBody $pad={8}>
            <TwoRows>
              <Combo label="数字格式" value="自定义" w={131} />
              <Line>
                <Tool $w={23} aria-label="会计数字格式"><CurrencyIcon /></Tool><CaretTool w={9} label="货币选项" />
                <SignTool $w={26}>%</SignTool>
                <Tool $w={16} aria-label="千位分隔样式"><CommaIcon /></Tool>
                <Divider $w={16} />
                <Tool $w={18} aria-label="增加小数位数"><DecimalIcon more /></Tool>
                <Tool $w={22} aria-label="减少小数位数"><DecimalIcon /></Tool>
              </Line>
            </TwoRows>
          </GroupBody>
          <GroupCaption text="数字" launcher />
        </Group>

        <Group $w={196}>
          <GroupBody $pad={3}>
            <BigTool $w={62}><BigIcon><CondIcon /></BigIcon><BigLine>条件格式</BigLine><BigLine><Caret /></BigLine></BigTool>
            <BigTool $w={56}><BigIcon><TableStyleIcon /></BigIcon><BigLine>套用</BigLine><BigLine>表格格式<Caret /></BigLine></BigTool>
            <BigTool $w={70}><BigIcon><CellStyleIcon /></BigIcon><BigLine>单元格样式</BigLine><BigLine><Caret /></BigLine></BigTool>
          </GroupBody>
          <GroupCaption text="样式" />
        </Group>

        <Group $w={82}>
          <GroupBody $pad={10}>
            <ThreeRows>
              <CellsLine><InsertIcon />插入<Caret /></CellsLine>
              <CellsLine><DeleteIcon />删除<Caret /></CellsLine>
              <CellsLine $tight><FormatIcon />格式<Caret /></CellsLine>
            </ThreeRows>
          </GroupBody>
          <GroupCaption text="单元格" />
        </Group>

        <Group $w={181}>
          <GroupBody $pad={9}>
            <ThreeRows>
              <Line><Tool $w={20} aria-label="自动求和"><SumIcon /></Tool><CaretTool w={11} label="求和选项" /></Line>
              <Line><Tool $w={20} aria-label="填充"><FillDownIcon /></Tool><CaretTool w={9} label="填充选项" /></Line>
              <Line><Tool $w={20} aria-label="清除"><EraserIcon /></Tool><CaretTool w={9} label="清除选项" /></Line>
            </ThreeRows>
            <BigTool $w={70}><BigIcon><SortIcon /></BigIcon><BigLine>排序和筛选</BigLine><BigLine><Caret /></BigLine></BigTool>
            <BigTool $w={60}><BigIcon><FindIcon /></BigIcon><BigLine>查找和选择</BigLine><BigLine><Caret /></BigLine></BigTool>
          </GroupBody>
          <GroupCaption text="编辑" />
        </Group>

        <Group $w={94}>
          <GroupBody>
            <BigTool $w={93}><BigIcon><FaxIcon /></BigIcon><BigLine>Internet 传真</BigLine></BigTool>
          </GroupBody>
          <GroupCaption text="新建组" />
        </Group>
        <CollapseButton aria-label="折叠功能区"><Icon w={11} h={6}><path d="M.5 5.500l5-5 5 5" stroke="#555" /></Icon></CollapseButton>
      </Ribbon>

      <FormulaBar>
        <NameField><input aria-label="名称框" defaultValue="E1" /><Icon w={7} h={4}><path d="M0 0h7L3.500 4z" fill="#777" /></Icon></NameField>
        <Dots><i /><i /><i /></Dots>
        <FormulaButtons>
          <button aria-label="取消"><Icon w={11} h={11}><path d="M1 1l9 9M10 1l-9 9" stroke="#bdbdbd" strokeWidth="1.800" /></Icon></button>
          <button aria-label="输入"><Icon w={13} h={11}><path d="M1 6l4 4 7-8.500" stroke="#bdbdbd" strokeWidth="2.200" /></Icon></button>
          <button aria-label="插入函数"><FxSign>f<small>x</small></FxSign></button>
        </FormulaButtons>
        <FormulaField><input aria-label="编辑栏" defaultValue="地区" /><Icon w={8} h={6}><path d="M1 1l3 3 3-3" stroke="#666" strokeWidth="2" /></Icon></FormulaField>
      </FormulaBar>

      <SheetArea>
        <Pane>
          <Grid>
            <colgroup>
              <col width={29} />
              {headings.map((h) => <col key={h} width={85} />)}
              {emptyCols.map((c) => <col key={c} width={c === 'Q' ? undefined : 72} />)}
            </colgroup>
            <thead>
              <tr>
                <CornerHead><Icon w={12} h={12}><path d="M12 0v12H0z" fill="#b5b5b5" /></Icon></CornerHead>
                {letters.map((l) => <ColHead key={l} scope="col" $on={l === 'E'}>{l}</ColHead>)}
                <ColHead />
              </tr>
            </thead>
            <tbody>
              <TitleRow>
                <RowHead scope="row" $on>1</RowHead>
                {headings.map((h) => (h === '地区' ? <ActiveCell key={h}>{h}</ActiveCell> : <TitleCell key={h}>{h}</TitleCell>))}
                {emptyCols.map((c) => <EmptyCell key={c} />)}
              </TitleRow>
              {sales.map(([date, who, area, price, qty, total, profit], i) => (
                <DataRow key={i}>
                  <RowHead scope="row">{i + 2}</RowHead>
                  <DataCell>{i + 1}</DataCell>
                  <DataCell>{date}</DataCell>
                  <DataCell>{`AA${String(i + 1).padStart(4, '0')}`}</DataCell>
                  <DataCell $han>{who}</DataCell>
                  <DataCell $han>{area}</DataCell>
                  <DataCell $han>鼠标</DataCell>
                  <DataCell>14</DataCell>
                  <DataCell>{price}</DataCell>
                  <DataCell>{qty}</DataCell>
                  <DataCell>{total}</DataCell>
                  <DataCell>{profit}</DataCell>
                  {emptyCols.map((c) => <EmptyCell key={c} />)}
                </DataRow>
              ))}
              <DataRow>
                <RowHead />
                {headings.map((h) => <DataCell key={h} />)}
                {emptyCols.map((c) => <EmptyCell key={c} />)}
              </DataRow>
            </tbody>
          </Grid>
        </Pane>
        <VerticalScroll>
          <ScrollArrow aria-label="向上滚动"><Icon w={7} h={4}><path d="M0 4h7L3.500 0z" fill="#666" /></Icon></ScrollArrow>
          <VerticalThumb />
          <Spacer />
          <ScrollArrow aria-label="向下滚动"><Icon w={7} h={4}><path d="M0 0h7L3.500 4z" fill="#666" /></Icon></ScrollArrow>
        </VerticalScroll>
      </SheetArea>

      <SheetBar>
        <SheetNav>
          <button aria-label="上一个工作表"><Icon w={4} h={7}><path d="M4 0v7L0 3.500z" fill="#bdbdbd" /></Icon></button>
          <button aria-label="下一个工作表"><Icon w={4} h={7}><path d="M0 0v7l4-3.500z" fill={GREEN} /></Icon></button>
        </SheetNav>
        {sheetTabs.map((t) => <SheetTab key={t}>{t}</SheetTab>)}
        <ActiveSheetTab>9 高级筛选</ActiveSheetTab>
        <MoreTabs>...</MoreTabs>
        <AddSheet aria-label="新建工作表"><Icon w={16} h={16}><circle cx="8" cy="8" r="7.300" stroke="#777" strokeWidth="1.200" /><path d="M8 4v8M4 8h8" stroke="#777" strokeWidth="1.600" /></Icon></AddSheet>
        <Dots><i /><i /><i /></Dots>
        <HorizontalScroll>
          <ScrollArrow aria-label="向左滚动"><Icon w={4} h={7}><path d="M4 0v7L0 3.500z" fill="#555" /></Icon></ScrollArrow>
          <HorizontalThumb />
          <Spacer />
          <ScrollArrow aria-label="向右滚动"><Icon w={4} h={7}><path d="M0 0v7l4-3.500z" fill="#555" /></Icon></ScrollArrow>
        </HorizontalScroll>
      </SheetBar>

      <StatusBar>
        <ViewButton $on aria-label="普通"><ViewIcon kind="normal" /></ViewButton>
        <ViewButton aria-label="页面布局视图"><ViewIcon kind="page" /></ViewButton>
        <ViewButton aria-label="分页预览"><ViewIcon kind="break" /></ViewButton>
        <ZoomButton aria-label="缩小">−</ZoomButton>
        <ZoomSlider type="range" aria-label="缩放" defaultValue={50} />
        <ZoomButton aria-label="放大">+</ZoomButton>
        <ZoomValue>100%</ZoomValue>
      </StatusBar>

      <Taskbar>
        <Subtitle>对地区进行排序 然后再次使用分类汇总</Subtitle>
        <Slot $state="open" aria-label="浏览器"><BrowserIcon /></Slot>
        <StackedSlot $state="open" aria-label="资源管理器"><FolderIcon /></StackedSlot>
        {adobe.map(([name, c, bg]) => <Slot key={name}><AdobeTile $c={c} $bg={bg}>{name}</AdobeTile></Slot>)}
        <Slot aria-label="视频编辑"><FilmIcon /></Slot>
        <Slot aria-label="录屏"><CaptureIcon /></Slot>
        <Slot aria-label="小熊"><BearIcon /></Slot>
        <Slot aria-label="QQ"><QQPenguin s={32} /></Slot>
        <Slot aria-label="Chrome"><ChromeIcon /></Slot>
        <Slot aria-label="猎豹浏览器"><CheetahIcon /></Slot>
        <Slot $state="open" aria-label="记事本"><NotepadIcon /></Slot>
        <Slot $state="active" aria-label="Excel"><ExcelLogo /></Slot>
        <Tray>
          <TrayButton aria-label="显示隐藏的图标"><Icon w={8} h={5}><path d="M0 5h8L4 0z" fill="#fff" stroke="#555" strokeWidth=".5" /></Icon></TrayButton>
          <TrayButton aria-label="QQ 消息"><QQPenguin s={16} /></TrayButton>
          <TrayButton aria-label="操作中心"><FlagIcon /></TrayButton>
          <TrayButton aria-label="电源"><PowerIcon /></TrayButton>
          <TrayButton aria-label="网络"><SignalIcon /></TrayButton>
          <TrayButton aria-label="音量"><VolumeIcon /></TrayButton>
          <TrayButton $w={30}>中</TrayButton>
          <TrayButton $w={26} aria-label="搜狗输入法"><SogouIcon /></TrayButton>
          <Clock>6:58<br />2020/4/23</Clock>
        </Tray>
      </Taskbar>

      <Activation>
        <Icon w={26} h={48}><path d="M13 1a12 12 0 0 1 4 23v17l-4 6-4-4V24A12 12 0 0 1 13 1z" fill="#b5b5b5" /><path d="M4 13a9 9 0 0 1 18 0z" fill="#fff" /></Icon>
        <div>
          <ActivationTitle>激活 Windows</ActivationTitle>
          <ActivationHint>转到“电脑设置”以激活 Windows。</ActivationHint>
        </div>
      </Activation>

      <Watermark>
        <WatermarkRow>
          <WatermarkLatin>Bai</WatermarkLatin>
          <WatermarkPaw>
            <Icon w={70} h={82}>
              <g fill="#fff" fillOpacity=".85" stroke="#d6d6d6" strokeWidth="2">
                <ellipse cx="8" cy="31" rx="9" ry="12" /><ellipse cx="24" cy="14" rx="9" ry="12" /><ellipse cx="46" cy="15" rx="9" ry="12" /><ellipse cx="59" cy="35" rx="9" ry="11" />
                <path d="M34 33c12 0 14 12 23 21 8 9 6 25-8 26-8 0-22 0-30 0C4 79 0 63 10 54c9-9 12-21 24-21z" />
              </g>
            </Icon>
            <PawText>du</PawText>
          </WatermarkPaw>
          <WatermarkHan>经验</WatermarkHan>
        </WatermarkRow>
        <WatermarkUrl>jingyan.baidu.com</WatermarkUrl>
      </Watermark>

      <Arrows width="1366" height="768" viewBox="0 0 1366 768" fill="none" aria-hidden="true">
        <path d="M282 231L358 241M876 365L1082 140" stroke="red" strokeWidth="4" strokeLinecap="round" />
        <path d="M385 246L351 232L356 241L349 249zM1101 119L1070 138L1080 141L1084 151z" fill="red" />
      </Arrows>
    </Window>
  );
}
